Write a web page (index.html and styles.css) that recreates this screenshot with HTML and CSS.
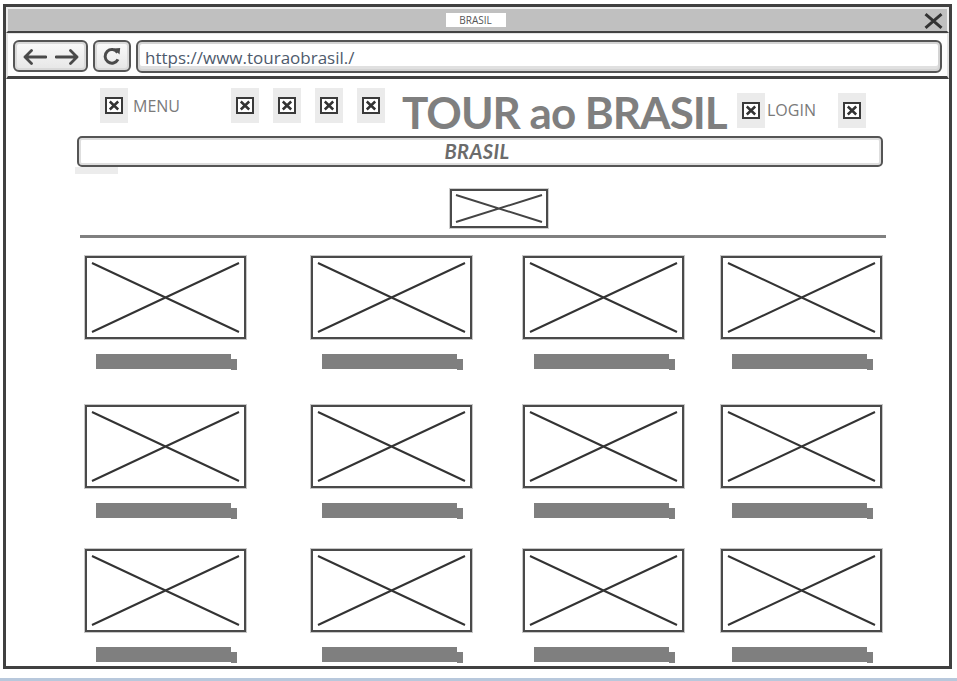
FILE: index.html
```html
<!DOCTYPE html>
<html lang="pt">
<head>
<meta charset="utf-8">
<title>TOUR ao BRASIL</title>
<link rel="stylesheet" href="styles.css">
</head>
<body>
<div class="window">
  <div class="titlebar">
    <span></span>
    <span class="tab">BRASIL</span>
    <svg class="close" width="19" height="16" viewBox="0 0 19 16"><path d="M1.5 1.2 L17.5 14.8 M17.5 1.2 L1.5 14.8" stroke="#333" stroke-width="3" fill="none"/></svg>
  </div>
  <div class="addressbar">
    <div class="btn nav">
      <svg width="25" height="16" viewBox="0 0 25 16"><path d="M3 8 H24 M9.5 1.5 L3 8 L9.5 14.5" stroke="#4a4a4a" stroke-width="2.8" fill="none" stroke-linecap="round" stroke-linejoin="round"/></svg>
      <svg width="25" height="16" viewBox="0 0 25 16"><path d="M1 8 H22 M15.5 1.5 L22 8 L15.5 14.5" stroke="#4a4a4a" stroke-width="2.8" fill="none" stroke-linecap="round" stroke-linejoin="round"/></svg>
    </div>
    <div class="btn refresh">
      <svg width="20" height="20" viewBox="0 0 20 20"><path d="M15.6 6.6 A6.8 6.8 0 1 0 16 13.4" stroke="#4a4a4a" stroke-width="3" fill="none"/><path d="M11.5 2.4 L18.2 2 L17.5 8.6 Z" fill="#4a4a4a"/></svg>
    </div>
    <div class="url">https://www.touraobrasil./</div>
  </div>
  <div class="content">
    <header class="top">
      <span class="ibox"><svg class="icon" width="18" height="17" viewBox="0 0 18 17"><rect x="1" y="1" width="16" height="15" fill="#fff" stroke="#3a3a3a" stroke-width="2"/><path d="M4.8 4.5 L13.2 12.5 M13.2 4.5 L4.8 12.5" stroke="#333" stroke-width="2.5"/></svg></span>
      <span class="menu">MENU</span>
      <span class="ibox first-icon"><svg class="icon" width="18" height="17" viewBox="0 0 18 17"><rect x="1" y="1" width="16" height="15" fill="#fff" stroke="#3a3a3a" stroke-width="2"/><path d="M4.8 4.5 L13.2 12.5 M13.2 4.5 L4.8 12.5" stroke="#333" stroke-width="2.5"/></svg></span>
      <span class="ibox next-icon"><svg class="icon" width="18" height="17" viewBox="0 0 18 17"><rect x="1" y="1" width="16" height="15" fill="#fff" stroke="#3a3a3a" stroke-width="2"/><path d="M4.8 4.5 L13.2 12.5 M13.2 4.5 L4.8 12.5" stroke="#333" stroke-width="2.5"/></svg></span>
      <span class="ibox next-icon"><svg class="icon" width="18" height="17" viewBox="0 0 18 17"><rect x="1" y="1" width="16" height="15" fill="#fff" stroke="#3a3a3a" stroke-width="2"/><path d="M4.8 4.5 L13.2 12.5 M13.2 4.5 L4.8 12.5" stroke="#333" stroke-width="2.5"/></svg></span>
      <span class="ibox next-icon"><svg class="icon" width="18" height="17" viewBox="0 0 18 17"><rect x="1" y="1" width="16" height="15" fill="#fff" stroke="#3a3a3a" stroke-width="2"/><path d="M4.8 4.5 L13.2 12.5 M13.2 4.5 L4.8 12.5" stroke="#333" stroke-width="2.5"/></svg></span>
      <h1 class="brand">TOUR ao BRASIL</h1>
      <span class="ibox login-icon"><svg class="icon" width="18" height="17" viewBox="0 0 18 17"><rect x="1" y="1" width="16" height="15" fill="#fff" stroke="#3a3a3a" stroke-width="2"/><path d="M4.8 4.5 L13.2 12.5 M13.2 4.5 L4.8 12.5" stroke="#333" stroke-width="2.5"/></svg></span>
      <span class="login">LOGIN</span>
      <span class="ibox last-icon"><svg class="icon" width="18" height="17" viewBox="0 0 18 17"><rect x="1" y="1" width="16" height="15" fill="#fff" stroke="#3a3a3a" stroke-width="2"/><path d="M4.8 4.5 L13.2 12.5 M13.2 4.5 L4.8 12.5" stroke="#333" stroke-width="2.5"/></svg></span>
    </header>
    <div class="search">BRASIL</div>
    <div class="smudge"></div>
    <div class="hero"><svg width="94" height="35" viewBox="0 0 94 35" preserveAspectRatio="none"><path d="M4 4 L90 31 M90 4 L4 31" stroke="#444" stroke-width="2" fill="none"/></svg></div>
    <div class="rule"></div>
    <div class="grid">
      <div class="item"><div class="card"><svg viewBox="0 0 157 79" preserveAspectRatio="none"><path d="M5 5 L152 74 M152 5 L5 74" stroke="#333" stroke-width="2" fill="none"/></svg></div><div class="bar"><span class="bar-main"></span><span class="bar-tip"></span></div></div>
      <div class="item"><div class="card"><svg viewBox="0 0 157 79" preserveAspectRatio="none"><path d="M5 5 L152 74 M152 5 L5 74" stroke="#333" stroke-width="2" fill="none"/></svg></div><div class="bar"><span class="bar-main"></span><span class="bar-tip"></span></div></div>
      <div class="item"><div class="card"><svg viewBox="0 0 157 79" preserveAspectRatio="none"><path d="M5 5 L152 74 M152 5 L5 74" stroke="#333" stroke-width="2" fill="none"/></svg></div><div class="bar"><span class="bar-main"></span><span class="bar-tip"></span></div></div>
      <div class="item"><div class="card"><svg viewBox="0 0 157 79" preserveAspectRatio="none"><path d="M5 5 L152 74 M152 5 L5 74" stroke="#333" stroke-width="2" fill="none"/></svg></div><div class="bar"><span class="bar-main"></span><span class="bar-tip"></span></div></div>
      <div class="item"><div class="card"><svg viewBox="0 0 157 79" preserveAspectRatio="none"><path d="M5 5 L152 74 M152 5 L5 74" stroke="#333" stroke-width="2" fill="none"/></svg></div><div class="bar"><span class="bar-main"></span><span class="bar-tip"></span></div></div>
      <div class="item"><div class="card"><svg viewBox="0 0 157 79" preserveAspectRatio="none"><path d="M5 5 L152 74 M152 5 L5 74" stroke="#333" stroke-width="2" fill="none"/></svg></div><div class="bar"><span class="bar-main"></span><span class="bar-tip"></span></div></div>
      <div class="item"><div class="card"><svg viewBox="0 0 157 79" preserveAspectRatio="none"><path d="M5 5 L152 74 M152 5 L5 74" stroke="#333" stroke-width="2" fill="none"/></svg></div><div class="bar"><span class="bar-main"></span><span class="bar-tip"></span></div></div>
      <div class="item"><div class="card"><svg viewBox="0 0 157 79" preserveAspectRatio="none"><path d="M5 5 L152 74 M152 5 L5 74" stroke="#333" stroke-width="2" fill="none"/></svg></div><div class="bar"><span class="bar-main"></span><span class="bar-tip"></span></div></div>
      <div class="item"><div class="card"><svg viewBox="0 0 157 79" preserveAspectRatio="none"><path d="M5 5 L152 74 M152 5 L5 74" stroke="#333" stroke-width="2" fill="none"/></svg></div><div class="bar"><span class="bar-main"></span><span class="bar-tip"></span></div></div>
      <div class="item"><div class="card"><svg viewBox="0 0 157 79" preserveAspectRatio="none"><path d="M5 5 L152 74 M152 5 L5 74" stroke="#333" stroke-width="2" fill="none"/></svg></div><div class="bar"><span class="bar-main"></span><span class="bar-tip"></span></div></div>
      <div class="item"><div class="card"><svg viewBox="0 0 157 79" preserveAspectRatio="none"><path d="M5 5 L152 74 M152 5 L5 74" stroke="#333" stroke-width="2" fill="none"/></svg></div><div class="bar"><span class="bar-main"></span><span class="bar-tip"></span></div></div>
      <div class="item"><div class="card"><svg viewBox="0 0 157 79" preserveAspectRatio="none"><path d="M5 5 L152 74 M152 5 L5 74" stroke="#333" stroke-width="2" fill="none"/></svg></div><div class="bar"><span class="bar-main"></span><span class="bar-tip"></span></div></div>
    </div>
  </div>
</div>
<div class="taskbar"></div>
</body>
</html>
```
FILE: styles.css
```css
html, body {
  margin: 0;
  padding: 0;
  height: 681px;
  overflow: hidden;
  background: #fff;
  font-family: "Open Sans", "DejaVu Sans", sans-serif;
}

.window {
  margin: 4px 0 0 3px;
  width: 949px;
  height: 665px;
  box-sizing: border-box;
  border: 3px solid #404040;
  display: flex;
  flex-direction: column;
  background: #fff;
}

.titlebar {
  height: 26px;
  box-sizing: border-box;
  background: #c0c0c0;
  border: 2px solid #ededed;
  border-bottom: 2px solid #404040;
  display: grid;
  grid-template-columns: 1fr auto 1fr;
  align-items: start;
  padding: 4px 4px 0 0;
}

.tab {
  width: 60px;
  height: 14px;
  background: #fff;
  font-size: 10px;
  line-height: 14px;
  color: #555;
  text-align: center;
}

.close {
  justify-self: end;
}

.addressbar {
  height: 46px;
  box-sizing: border-box;
  background: #fdfdfd;
  border: 2px solid #e4e4e4;
  border-top-width: 1px;
  border-bottom: 3px solid #404040;
  display: flex;
  align-items: flex-start;
  gap: 5px;
  padding: 6px 5px 0 5px;
}

.btn {
  height: 32px;
  box-sizing: border-box;
  border: 2px solid #555;
  border-radius: 6px;
  background: linear-gradient(#fafafa, #e6e6e6);
  box-shadow: inset 0 0 0 2px #d9d9d9;
  display: flex;
  align-items: center;
  justify-content: center;
}

.nav {
  width: 75px;
  gap: 8px;
  padding-top: 1px;
}

.refresh {
  width: 38px;
}

.url {
  flex: 1;
  height: 33px;
  box-sizing: border-box;
  border: 2px solid #555;
  border-radius: 6px;
  box-shadow: inset 0 0 0 2px #d4d4d4, inset 0 -3px 0 2px #e0e0e0;
  background: #fff;
  padding: 5px 0 0 7px;
  font-size: 17px;
  line-height: 22px;
  color: #4e5a6c;
}

.content {
  flex: 1;
  background: #fff;
}

.top {
  height: 57px;
  box-sizing: border-box;
  padding: 9px 0 0 94px;
  display: flex;
  align-items: flex-start;
}

.ibox {
  width: 28px;
  height: 35px;
  background: #ebebeb;
  display: flex;
  align-items: center;
  justify-content: center;
  flex: none;
}

.icon {
  display: block;
}

.menu, .login {
  font-size: 16px;
  line-height: 22px;
  color: #7a7a7a;
  flex: none;
}

.menu {
  margin: 7px 0 0 5px;
}

.first-icon {
  margin-left: 51px;
}

.next-icon {
  margin-left: 14px;
}

.brand {
  margin: 2px 0 0 17px;
  width: 324px;
  flex: none;
  white-space: nowrap;
  font-family: Lato, "Open Sans", sans-serif;
  font-size: 44px;
  line-height: 44px;
  font-weight: 700;
  letter-spacing: -1px;
  color: #7f7f7f;
}

.login-icon {
  margin: 5px 0 0 11px;
}

.login {
  margin: 11px 0 0 2px;
}

.last-icon {
  margin: 5px 0 0 22px;
}

.search {
  margin-left: 71px;
  width: 806px;
  height: 31px;
  box-sizing: border-box;
  border: 2px solid #555;
  border-radius: 5px;
  box-shadow: inset 0 0 0 2px #dedede;
  padding-right: 6px;
  text-align: center;
  font-family: Lato, "Open Sans", sans-serif;
  font-size: 20px;
  line-height: 27px;
  font-weight: 700;
  font-style: italic;
  letter-spacing: 0.4px;
  color: #6b6b6b;
}

.smudge {
  margin-left: 69px;
  width: 43px;
  height: 7px;
  background: #ececec;
}

.hero {
  margin: 15px 0 0 444px;
  width: 98px;
  height: 39px;
  box-sizing: border-box;
  border: 2px solid #4a4a4a;
  box-shadow: 0 0 0 1px #cfcfcf;
}

.hero svg {
  display: block;
}

.rule {
  margin: 7px 0 0 74px;
  width: 806px;
  height: 3px;
  background: #808080;
}

.grid {
  margin: 18px 0 0 79px;
  display: grid;
  grid-template-columns: 226px 212px 198px 161px;
  grid-template-rows: 149px 144px auto;
}

.card {
  width: 161px;
  height: 83px;
  box-sizing: border-box;
  border: 2px solid #4a4a4a;
  box-shadow: 0 0 0 1px #c8c8c8;
  background: #fff;
}

.card svg {
  display: block;
  width: 157px;
  height: 79px;
}

.bar {
  margin: 15px 0 0 11px;
  display: flex;
  align-items: flex-start;
}

.bar-main {
  width: 135px;
  height: 15px;
  background: #7f7f7f;
}

.bar-tip {
  width: 6px;
  height: 11px;
  margin-top: 5px;
  background: #7f7f7f;
}

.taskbar {
  margin-top: 9px;
  height: 10px;
  background: #b8c8dc;
}
```
